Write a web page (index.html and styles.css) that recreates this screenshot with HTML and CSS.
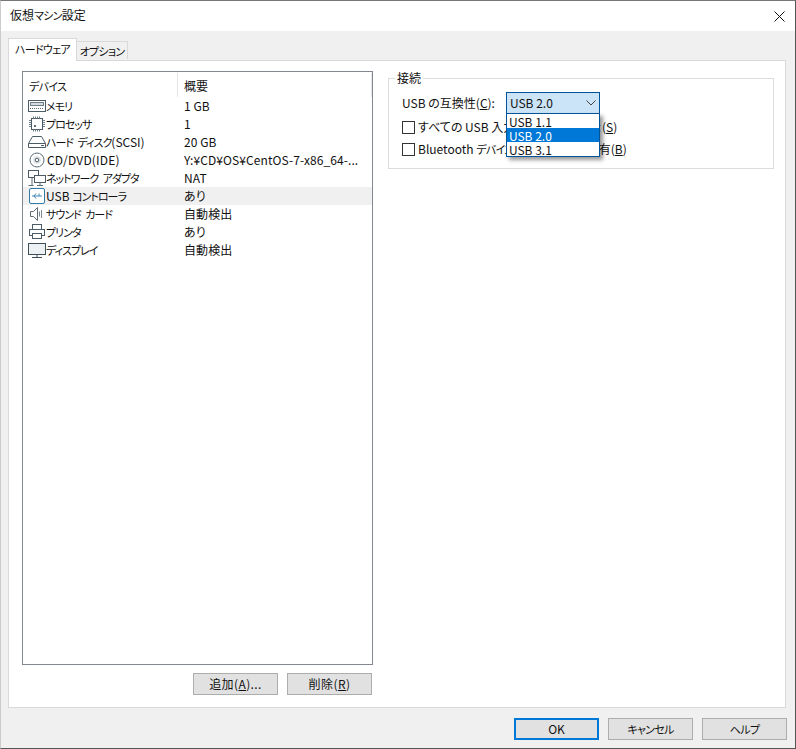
FILE: index.html
```html
<!DOCTYPE html>
<html lang="ja">
<head>
<meta charset="utf-8">
<title>仮想マシン設定</title>
<link rel="stylesheet" href="styles.css">
</head>
<body>
<div class="window">
  <header class="titlebar">
    <span class="title">仮想<span class="k">マシン</span>設定</span>
    <svg class="close" width="11" height="11" viewBox="0 0 11 11"><path d="M.5.5l10 10M10.500.5l-10 10" stroke="#111" fill="none"/></svg>
  </header>
  <div class="body">
    <nav class="tabs">
      <div class="tab active"><span class="k">ハードウェア</span></div>
      <div class="tab"><span class="k">オプション</span></div>
    </nav>
    <main class="pane">
      <section class="left">
        <div class="list">
          <div class="list-head">
            <div class="col1"><span class="k">デバイス</span></div>
            <div class="col2">概要</div>
          </div>
          <div class="row"><div class="dev"><svg class="ico" viewBox="0 0 18 16"><rect x=".5" y="2.500" width="17" height="11" fill="#fff" stroke="#4c5c66"/><rect x="2.500" y="4.500" width="13" height="3" fill="#d5dbe0" stroke="#6f7d86"/><path d="M2 10.500h14" stroke="#5d6d77" stroke-dasharray="1 1"/></svg><span class="k t">メモリ</span></div><div class="sum">1 GB</div></div>
          <div class="row"><div class="dev"><svg class="ico" viewBox="0 0 18 16"><rect x="3.500" y="2.500" width="11" height="11" fill="#fff" stroke="#4c5c66"/><path d="M1 4.500h2M1 6.500h2M1 8.500h2M1 10.500h2M15 4.500h2M15 6.500h2M15 8.500h2M15 10.500h2M5.500 .5v2M7.500 .5v2M9.500 .5v2M11.500 .5v2M5.500 13.500v2M7.500 13.500v2M9.500 13.500v2M11.500 13.500v2" stroke="#6f7d86"/><rect x="6" y="9" width="2" height="2" fill="#5d6d77"/></svg><span class="k t">プロセッサ</span></div><div class="sum">1</div></div>
          <div class="row"><div class="dev"><svg class="ico" viewBox="0 0 18 16"><path d="M4.500 2.500h9l4 7v4H.5v-4z" fill="#fff" stroke="#4c5c66"/><path d="M.5 9.500h17M13 11.500h3" stroke="#4c5c66"/></svg><span><span class="k t">ハード ディスク</span>(SCSI)</span></div><div class="sum">20 GB</div></div>
          <div class="row"><div class="dev"><svg class="ico" viewBox="0 0 18 16"><circle cx="9" cy="8" r="7" fill="#fff" stroke="#5d6d77"/><circle cx="9" cy="8" r="4" fill="#e3e7ea"/><circle cx="9" cy="8" r="1.800" fill="#fff" stroke="#4c5c66"/></svg><span class="wide">CD/DVD(IDE)</span></div><div class="sum">Y:¥CD¥OS¥CentOS-7-x86_64-...</div></div>
          <div class="row"><div class="dev"><svg class="ico" viewBox="0 0 18 16"><rect x=".5" y=".5" width="10" height="7" fill="#fff" stroke="#4c5c66"/><rect x="6.500" y="5.500" width="11" height="7" fill="#fff" stroke="#4c5c66"/><path d="M4 8v7M.5 15.500h5M12 13v2M9 15.500h6" stroke="#5d6d77" fill="none"/></svg><span class="k t">ネットワーク アダプタ</span></div><div class="sum">NAT</div></div>
          <div class="row selected"><div class="dev"><svg class="ico" viewBox="0 0 18 16"><rect x="1.500" y=".5" width="15" height="15" rx="1.500" fill="#fff" stroke="#2f7cae"/><path d="M4 8h10M11 5.500v2.500M8 10.500L6 8M8 5.500L6 8" stroke="#3f88b6" fill="none"/></svg><span>USB <span class="k t">コントローラ</span></span></div><div class="sum">あり</div></div>
          <div class="row"><div class="dev"><svg class="ico" viewBox="0 0 18 16"><path d="M2.500 5.500h3l4-4v13l-4-4h-3z" fill="#fff" stroke="#5d6d77"/><path d="M11.500 5.500v5M13.500 4v8" stroke="#7c8a93" fill="none"/></svg><span class="k t">サウンド カード</span></div><div class="sum">自動検出</div></div>
          <div class="row"><div class="dev"><svg class="ico" viewBox="0 0 18 16"><rect x="4.500" y=".5" width="9" height="5" fill="#fff" stroke="#4c5c66"/><rect x="1.500" y="5.500" width="15" height="6" fill="#fff" stroke="#4c5c66"/><rect x="4.500" y="9.500" width="9" height="5" fill="#fff" stroke="#4c5c66"/></svg><span class="k t">プリンタ</span></div><div class="sum">あり</div></div>
          <div class="row"><div class="dev"><svg class="ico" viewBox="0 0 18 16"><rect x=".5" y="1.500" width="17" height="11" fill="#eef1f3" stroke="#3f4f59"/><path d="M9 13v2M4 15.500h10" stroke="#3f4f59"/></svg><span class="k t">ディスプレイ</span></div><div class="sum">自動検出</div></div>
        </div>
        <div class="left-buttons">
          <button class="btn spaced">追加(<u>A</u>)...</button>
          <button class="btn spaced">削除(<u>R</u>)</button>
        </div>
      </section>
      <section class="right">
        <fieldset class="group">
          <legend>接続</legend>
          <div class="compat">
            <label>USB の互換性(<u>C</u>):</label>
            <div class="combo"><span>USB 2.0</span>
              <svg width="10" height="6" viewBox="0 0 10 6"><path d="M.5.500L5 5 9.500.5" stroke="#444" fill="none"/></svg>
              <ul class="menu">
                <li>USB 1.1</li>
                <li class="hl">USB 2.0</li>
                <li>USB 3.1</li>
              </ul>
            </div>
          </div>
          <div class="check"><span class="box"></span><span>すべての USB 入<span class="loose">力デバイスを表示</span>(<u>S</u>)</span></div>
          <div class="check"><span class="box"></span><span>Bluetooth <span class="k">デバイス</span>を仮想<span class="k">マシン</span>と共有(<u>B</u>)</span></div>
        </fieldset>
      </section>
    </main>
    <footer class="footer">
      <button class="btn default">OK</button>
      <button class="btn"><span class="k">キャンセル</span></button>
      <button class="btn"><span class="k">ヘルプ</span></button>
    </footer>
  </div>
</div>
</body>
</html>
```
FILE: styles.css
```css
* { box-sizing: border-box; }
html, body { margin: 0; padding: 0; background: #fff; }
body { width: 796px; height: 749px; overflow: hidden; font: 12px/16px "Noto Sans CJK JP", "Noto Sans", sans-serif; font-feature-settings: "palt"; color: #111; }
u { text-decoration: underline; }
.k { font-size: 11px; letter-spacing: -.7px; }
.k.t { letter-spacing: -1px; word-spacing: 3px; }
.wide { letter-spacing: .2px; margin-left: 1px; }
.loose { letter-spacing: 1px; }
.spaced { letter-spacing: .4px; padding-bottom: 1px; }
.window { width: 796px; height: 749px; display: flex; flex-direction: column; border-top: 1px solid #777; border-right: 1px solid #555; border-bottom: 1px solid #555; border-left: 1px solid #ccc; }
.titlebar { height: 30px; flex: none; background: #fff; display: flex; align-items: center; justify-content: space-between; padding: 0 10px 1px 9px; }
.title { font-size: 12px; margin-top: -1px; }
.close { margin-top: 1px; }
.body { flex: 1; background: #f0f0f0; display: flex; flex-direction: column; padding: 7px 0 0 7px; }
.tabs { display: flex; height: 22px; flex: none; align-items: flex-end; }
.tab { height: 18px; width: 51px; text-align: center; white-space: nowrap; line-height: 17px; background: #f0f0f0; border: 1px solid #d9d9d9; border-bottom: none; border-left: none; margin-bottom: 1px; }
.tab.active { height: 23px; width: 69px; padding-top: 1px; background: #fff; border-left: 1px solid #d9d9d9; margin-bottom: -1px; position: relative; }
.pane { height: 648px; width: 778px; flex: none; background: #fff; border: 1px solid #d9d9d9; display: flex; padding: 10px 11px 12px 13px; gap: 15px; }
.left { width: 351px; flex: none; display: flex; flex-direction: column; }
.list { height: 594px; border: 1px solid #828790; padding-top: 1px; }
.list-head { display: flex; height: 24px; }
.col1 { width: 155px; padding: 5px 0 0 6px; border-right: 1px solid #e5e5e5; }
.col2 { padding: 5px 0 0 6px; flex: 1; border-right: 1px solid #e5e5e5; }
.row { display: flex; height: 18.05px; line-height: 18px; }
.row.selected { background: #f0f0f0; }
.dev { width: 155px; display: flex; align-items: center; padding-left: 5px; white-space: nowrap; }
.ico { width: 18px; height: 16px; flex: none; }
.sum { padding-left: 6px; white-space: nowrap; letter-spacing: .08px; }
.left-buttons { display: flex; justify-content: flex-end; gap: 9px; margin-top: 8px; padding-right: 1px; }
.btn { font: inherit; width: 85px; height: 22px; padding: 0; background: #e1e1e1; border: 1px solid #adadad; color: #111; }
.footer { flex: 1; display: flex; justify-content: flex-end; align-items: flex-start; gap: 9px; padding: 10px 8px 0 0; }
.btn.default { border: 2px solid #0078d7; }
.right { flex: 1; }
.group { margin: 0; padding: 0 0 0 13px; height: 98px; border: 1px solid #dcdcdc; }
legend { padding: 0 2px; margin-left: -7px; line-height: 14px; }
.compat { display: flex; align-items: center; margin-top: 7px; height: 22px; gap: 11px; }
.combo { position: relative; width: 94px; height: 22px; background: #cce4f7; border: 1px solid #005499; display: flex; align-items: center; justify-content: space-between; padding: 0 3px 0 3px; }
.menu { position: absolute; left: -1px; top: 20px; width: 94px; list-style: none; margin: 0; padding: 0; background: #fff; border: 1px solid #005499; box-shadow: 3px 3px 4px rgba(0,0,0,.4); z-index: 2; }
.menu li { height: 14px; line-height: 16px; padding-left: 2px; }
.menu li.hl { background: #0078d7; color: #fff; }
.check { display: flex; align-items: center; height: 18px; margin-top: 4px; white-space: nowrap; }
.box { width: 13px; height: 13px; border: 1px solid #333; background: #fff; margin-right: 3px; flex: none; }
```
